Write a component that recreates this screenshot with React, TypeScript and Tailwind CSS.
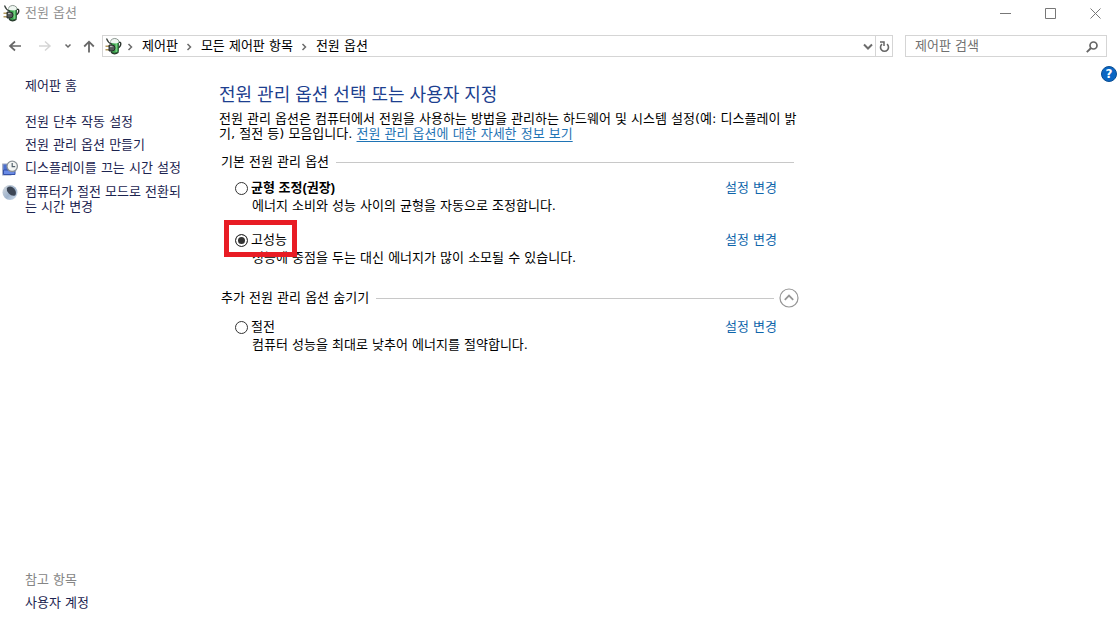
import type { ReactNode } from "react";

function PowerIcon() {
  return (
    <svg width="18" height="18" viewBox="0 0 18 18" aria-hidden="true" className="shrink-0">
      <path d="M13 5.500q2.800-.8 2.800 1.300 0 2.700-2.800 4.200" fill="none" stroke="#2c352f" strokeWidth="1.400" />
      <path d="M6 3.500v11q3.500 3.800 7.500 0v-11z" fill="#3aa04c" stroke="#24502e" strokeWidth="0.800" />
      <path d="M11.300 6v9" stroke="#74cf7e" strokeWidth="1.600" />
      <path d="M5.800 3.500Q9.700-.2 13.700 3.500v2.300q-4 1.400-7.900 0z" fill="#eef6f0" />
      <path d="M5.800 3.300Q9.700-.4 13.700 3.300" fill="none" stroke="#7d8a82" strokeWidth="0.900" />
      <path d="M1.500 1.500q1.500 4.200 5 5.500" fill="none" stroke="#39413c" strokeWidth="1.200" />
      <path d="M.5 9.300h4M.5 12.800h4" stroke="#b39a5c" strokeWidth="1.500" />
      <path d="M4 8h3q3 0 3 3t-3 3H4z" fill="#555b59" stroke="#222726" strokeWidth="0.900" />
      <path d="M5 9.500h2.500" stroke="#b6bcba" strokeWidth="1.200" />
      <path d="M6 15.300q3.500 3 7.500 0" fill="none" stroke="#263b2b" strokeWidth="1.200" />
    </svg>
  );
}

function DisplayTimerIcon() {
  return (
    <svg width="16" height="17" viewBox="0 0 16 17" aria-hidden="true">
      <path d="M.8 4h8v10.800h-8z" fill="#4a6fd0" stroke="#9aa3bb" strokeWidth="1.200" />
      <path d="M1.500 10h11.500v4.500h-11.500z" fill="#6a8be6" stroke="#3451a8" strokeWidth="1" />
      <circle cx="10.200" cy="6.300" r="5.200" fill="#f3f5f4" stroke="#8b9297" strokeWidth="1.300" />
      <path d="M10.200 3v3.600h3" fill="none" stroke="#56646e" strokeWidth="1.200" />
    </svg>
  );
}

function SleepIcon() {
  return (
    <svg width="16" height="17" viewBox="0 0 16 17" aria-hidden="true">
      <defs>
        <linearGradient id="moon" x1="0" y1="0" x2="1" y2="1">
          <stop offset="0" stopColor="#d5dade" />
          <stop offset="0.550" stopColor="#9fb3cc" />
          <stop offset="1" stopColor="#d8e5f3" />
        </linearGradient>
      </defs>
      <circle cx="8" cy="8.500" r="7.500" fill="url(#moon)" />
      <path d="M4.800 4q3.700-3 7.200.4 3.200 3.600 1.200 7.200-3.800.7-6.400-2.100T4.800 4z" fill="#3c4656" />
    </svg>
  );
}

function Chevron() {
  return (
    <svg width="6" height="8" viewBox="0 0 6 8" aria-hidden="true" className="mt-0.5 shrink-0">
      <path d="M1.500 1l3 3-3 3" fill="none" stroke="#6c6c6c" strokeWidth="1.500" />
    </svg>
  );
}

function TaskLink({ icon, children }: { icon?: ReactNode; children: ReactNode }) {
  return (
    <li className="flex">
      <span className="w-[25px] shrink-0 pl-0.5">{icon}</span>
      <a href="#" className="text-[#1c2450]">{children}</a>
    </li>
  );
}

type PlanProps = {
  id: string;
  name: string;
  description: string;
  bold?: boolean;
  checked?: boolean;
  marked?: boolean;
};

function Plan({ id, name, description, bold, checked, marked }: PlanProps) {
  return (
    <div className="pr-[22px] pl-4 leading-[18px]">
      <div className="flex items-center justify-between">
        <div className="relative flex items-center gap-[3px]">
          <input
            type="radio"
            id={id}
            name="plan"
            defaultChecked={checked}
            className="size-[13px] shrink-0 appearance-none rounded-full border border-[#333] bg-white checked:bg-[#333] checked:shadow-[inset_0_0_0_2px_white]"
          />
          <label
            htmlFor={id}
            className={bold ? "font-['Liberation_Sans','Noto_Sans_CJK_KR',sans-serif] font-bold" : ""}
          >
            {name}
          </label>
          {marked && (
            <span className="pointer-events-none absolute -top-[11px] -right-[10px] -bottom-2 -left-[11px] z-10 border-5 border-[#e81c24]" />
          )}
        </div>
        <a href="#" className="text-[#0f66ab]">설정 변경</a>
      </div>
      <p className="pl-[17px]">{description}</p>
    </div>
  );
}

export default function App() {
  return (
    <div className="flex min-h-screen flex-col bg-white font-['DejaVu_Sans','Noto_Sans_CJK_KR',sans-serif] text-[13px] leading-4 text-black">
      <header>
        <div className="flex h-[26px] items-center pl-[3px]">
          <PowerIcon />
          <h1 className="ml-1 text-[#929292]">전원 옵션</h1>
          <div className="ml-auto flex text-[#777]">
            <button aria-label="최소화" className="flex h-[26px] w-[46px] items-center justify-center">
              <svg width="11" height="11" viewBox="0 0 11 11"><path d="M0 5.500h11" stroke="currentColor" /></svg>
            </button>
            <button aria-label="최대화" className="flex h-[26px] w-[45px] items-center justify-center">
              <svg width="11" height="11" viewBox="0 0 11 11"><path d="M.5.5h10v10H.5z" fill="none" stroke="currentColor" /></svg>
            </button>
            <button aria-label="닫기" className="flex h-[26px] w-[44px] items-center justify-center">
              <svg width="11" height="11" viewBox="0 0 11 11"><path d="M.5.5l10 10m0-10l-10 10" stroke="currentColor" /></svg>
            </button>
          </div>
        </div>
        <div className="mt-[9px] flex h-[22px] items-center pr-[10px] pl-2">
          <nav className="flex w-[94px] shrink-0 items-center text-[#686868]">
            <button aria-label="뒤로">
              <svg width="14" height="12" viewBox="0 0 14 12"><path d="M13 6H2m5-4.500L2 6l5 4.500" fill="none" stroke="currentColor" strokeWidth="1.700" /></svg>
            </button>
            <button aria-label="앞으로" disabled className="ml-4 text-[#d5d5d5]">
              <svg width="14" height="12" viewBox="0 0 14 12"><path d="M1 6h11M7 1.500L12 6l-5 4.500" fill="none" stroke="currentColor" strokeWidth="1.500" /></svg>
            </button>
            <button aria-label="최근 위치" className="ml-3">
              <svg width="8" height="6" viewBox="0 0 8 6"><path d="M1.500 1.500L4 4l2.500-2.500" fill="none" stroke="currentColor" strokeWidth="1.500" /></svg>
            </button>
            <button aria-label="위로" className="ml-[11px]">
              <svg width="12" height="13" viewBox="0 0 12 13"><path d="M6 12.500V2M1.200 6.500L6 1.700l4.800 4.800" fill="none" stroke="currentColor" strokeWidth="1.800" /></svg>
            </button>
          </nav>
          <div className="flex h-full min-w-0 flex-1 items-center border border-[#d5d5d5]">
            <div className="flex items-center pl-0.5">
              <PowerIcon />
              <span className="ml-1 flex"><Chevron /></span>
              <a href="#" className="ml-[9px]">제어판</a>
              <span className="ml-2 flex"><Chevron /></span>
              <a href="#" className="ml-[9px]">모든 제어판 항목</a>
              <span className="ml-2 flex"><Chevron /></span>
              <a href="#" className="ml-[9px]">전원 옵션</a>
            </div>
            <button aria-label="이전 위치" className="mr-0.5 ml-auto pt-0.5 text-[#6c6c6c]">
              <svg width="10" height="8" viewBox="0 0 10 8"><path d="M1 1.500l4 4 4-4" fill="none" stroke="currentColor" strokeWidth="2" /></svg>
            </button>
            <button aria-label="새로 고침" className="flex h-full w-[17px] items-center justify-center border-l border-[#d5d5d5] text-[#666]">
              <svg width="11" height="13" viewBox="0 0 11 13"><path d="M8 4.200A4 4 0 1 1 3 4.200" fill="none" stroke="currentColor" strokeWidth="1.600" /><path d="M1 2h4v4" fill="none" stroke="currentColor" strokeWidth="1.500" /></svg>
            </button>
          </div>
          <form role="search" className="ml-3 flex h-full w-[202px] shrink-0 items-center border border-[#d5d5d5] pr-2 pl-[9px]">
            <input aria-label="제어판 검색" placeholder="제어판 검색" className="h-4 min-w-0 flex-1 outline-none placeholder:text-[#707070]" />
            <button type="button" aria-label="검색" className="mt-0.5 text-[#666]">
              <svg width="12" height="12" viewBox="0 0 12 12"><circle cx="7.500" cy="4.500" r="3.500" fill="none" stroke="currentColor" strokeWidth="1.700" /><path d="M5 7L.8 11.200" stroke="currentColor" strokeWidth="1.900" /></svg>
            </button>
          </form>
        </div>
      </header>

      <div className="flex flex-1">
        <aside className="flex w-[219px] shrink-0 flex-col pt-[21px] pr-[34px] pb-5">
          <a href="#" className="pl-[25px] text-[#1c2450]">제어판 홈</a>
          <ul className="mt-5 flex flex-col gap-[7px]">
            <TaskLink>전원 단추 작동 설정</TaskLink>
            <TaskLink>전원 관리 옵션 만들기</TaskLink>
            <TaskLink icon={<DisplayTimerIcon />}>
              <span className="whitespace-nowrap">디스플레이를 끄는 시간 설정</span>
            </TaskLink>
            <TaskLink icon={<SleepIcon />}>
              <span className="block leading-[15px] whitespace-nowrap">컴퓨터가 절전 모드로 전환되<br />는 시간 변경</span>
            </TaskLink>
          </ul>
          <div className="mt-auto flex flex-col gap-[7px] pl-[25px]">
            <h2 className="text-[#858585]">참고 항목</h2>
            <a href="#" className="text-[#1c2450]">사용자 계정</a>
          </div>
        </aside>

        <main className="w-[580px] pt-[26px]">
          <h2 className="font-['Liberation_Sans','Noto_Sans_CJK_KR',sans-serif] text-lg leading-6 text-[#1d3f8f]">
            전원 관리 옵션 선택 또는 사용자 지정
          </h2>
          <p className="mt-1 leading-[15px] whitespace-nowrap">
            전원 관리 옵션은 컴퓨터에서 전원을 사용하는 방법을 관리하는 하드웨어 및 시스템 설정(예: 디스플레이 밝
            <br />
            기, 절전 등) 모음입니다.{" "}
            <a href="#" className="text-[#1f74b5] underline underline-offset-3">전원 관리 옵션에 대한 자세한 정보 보기</a>
          </p>

          <section>
            <div className="mt-[13px] flex items-center gap-[7px] pr-[5px] pl-0.5">
              <h3>기본 전원 관리 옵션</h3>
              <hr className="flex-1 border-[#c8c8c8]" />
            </div>
            <div className="mt-[9px] flex flex-col gap-4">
              <Plan id="balanced" name="균형 조정(권장)" description="에너지 소비와 성능 사이의 균형을 자동으로 조정합니다." bold />
              <Plan id="performance" name="고성능" description="성능에 중점을 두는 대신 에너지가 많이 소모될 수 있습니다." checked marked />
            </div>
          </section>

          <section>
            <div className="mt-[21px] flex items-center gap-[7px] pl-0.5">
              <h3>추가 전원 관리 옵션 숨기기</h3>
              <hr className="flex-1 border-[#c8c8c8]" />
              <button aria-label="추가 전원 관리 옵션 숨기기" className="-ml-0.5 text-[#969696]">
                <svg width="20" height="20" viewBox="0 0 20 20" className="block"><circle cx="10" cy="10" r="9" fill="none" stroke="currentColor" strokeWidth="1.200" /><path d="M5.800 11.800L10 7.600l4.200 4.200" fill="none" stroke="currentColor" strokeWidth="1.800" /></svg>
              </button>
            </div>
            <div className="mt-[10px]">
              <Plan id="saver" name="절전" description="컴퓨터 성능을 최대로 낮추어 에너지를 절약합니다." />
            </div>
          </section>
        </main>

        <button aria-label="도움말" className="mt-[9px] ml-auto flex size-4 items-center justify-center rounded-full border border-[#0a4e93] bg-[#0b66c3] text-xs font-bold text-white">
          ?
        </button>
      </div>
    </div>
  );
}
